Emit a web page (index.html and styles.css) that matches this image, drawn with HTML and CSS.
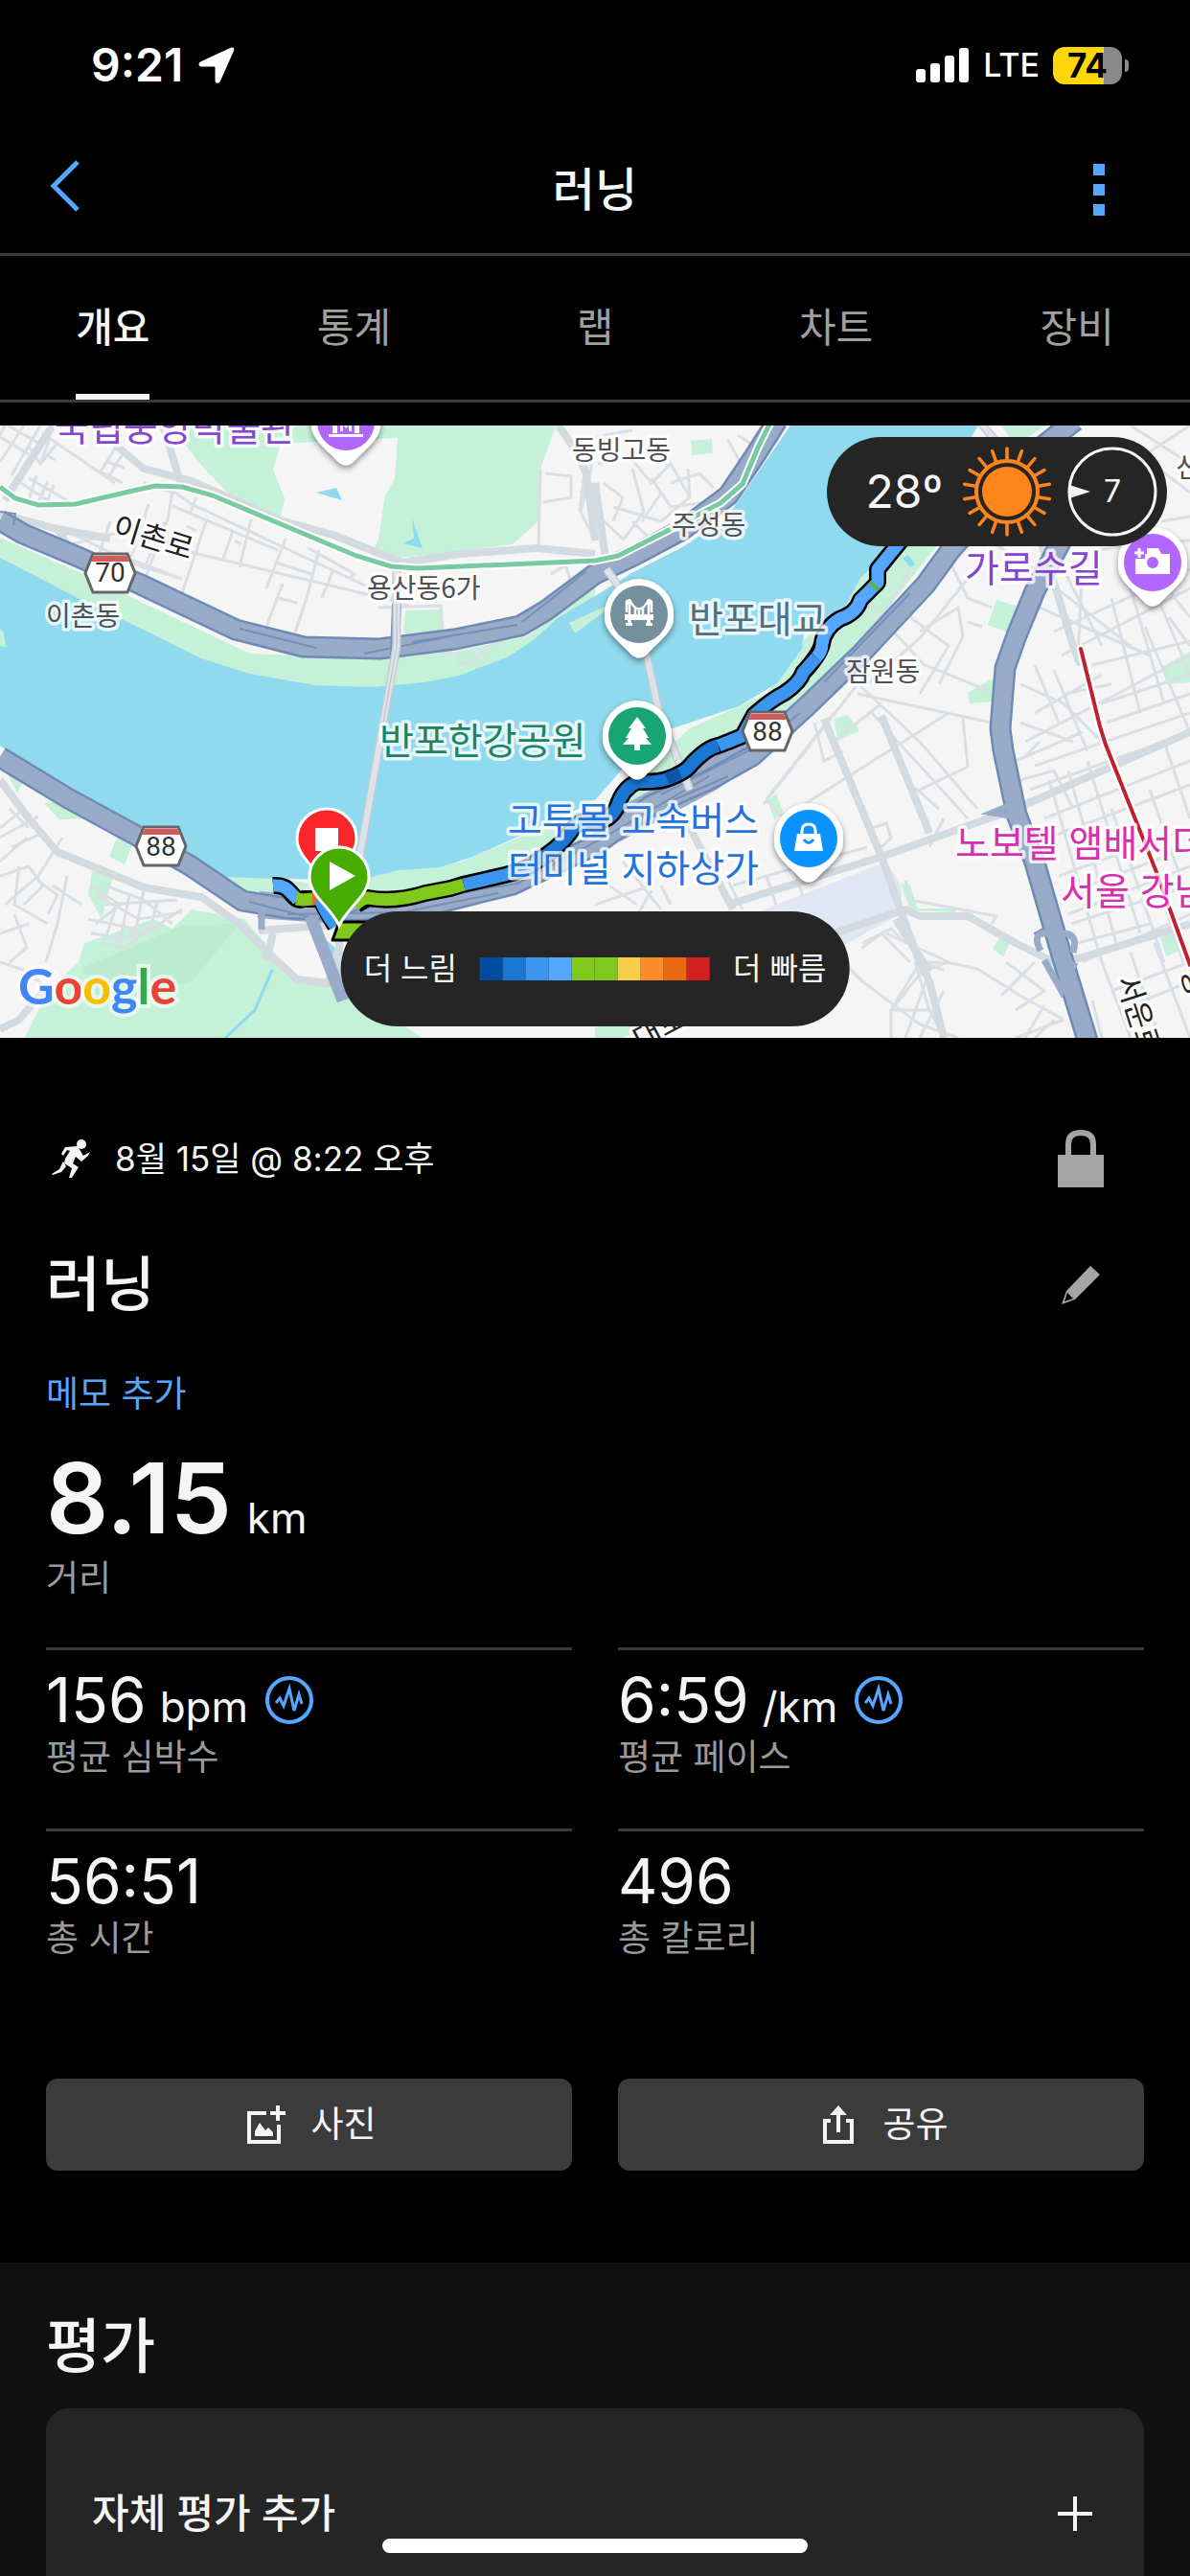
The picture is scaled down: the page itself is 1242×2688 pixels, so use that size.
FILE: index.html
```html
<!DOCTYPE html>
<html lang="ko">
<head>
	<meta charset="UTF-8">
	<title>러닝</title>
	<meta name="viewport" content="width=device-width, initial-scale=1.0"/>
	<link rel="stylesheet" href="styles.css">
</head>
<body>
<div class="app">
	<div class="status">
		<div class="status-left">
			<span class="clock">9:21</span>
			<svg class="i-loc" viewBox="0 0 38 38"><path fill="#fff" d="M34.500 0.500Q38.500 -0.200 37 4L23 35.500Q21.500 38.500 19 37.500Q17.500 37 17.500 35V21.500Q17.500 20.500 16.500 20.500H3Q0.500 20.500 0.500 18Q0.500 16 3 15Z"/></svg>
		</div>
		<div class="status-right">
			<svg class="i-signal" viewBox="0 0 56 36"><g fill="#fff"><rect x="0" y="22" width="10" height="14" rx="3"/><rect x="15" y="16" width="10" height="20" rx="3"/><rect x="30" y="8" width="10" height="28" rx="3"/><rect x="45" y="0" width="10" height="36" rx="3"/></g></svg>
			<span class="lte">LTE</span>
			<div class="battery"><span>74</span></div>
		</div>
	</div>

	<header class="nav">
		<button class="nav-btn" aria-label="뒤로"><svg class="i-back" viewBox="0 0 32 54"><path d="M29 2L4 27L29 52" fill="none" stroke="#55a6ff" stroke-width="5"/></svg></button>
		<h1>러닝</h1>
		<button class="nav-btn" aria-label="메뉴"><svg class="i-dots" viewBox="0 0 12 54"><path fill="#55a6ff" d="M0 0h12v12H0zM0 21h12v12H0zM0 42h12v12H0z"/></svg></button>
	</header>

	<nav class="tabs">
		<a href="#" class="on">개요</a>
		<a href="#">통계</a>
		<a href="#">랩</a>
		<a href="#">차트</a>
		<a href="#">장비</a>
	</nav>

	<div class="map">
		<svg class="map-svg" viewBox="0 0 1242 639" preserveAspectRatio="xMidYMid slice">
			<defs>
				<filter id="sh" x="-30%" y="-30%" width="160%" height="170%"><feDropShadow dx="0" dy="3" stdDeviation="3" flood-opacity=".45"/></filter>
				<path id="pin" d="M0 -37A37 37 0 0 1 36 4C36 18 20 29 9 41Q0 50 -9 41C-20 29 -36 18 -36 4A37 37 0 0 1 0 -37Z"/>
				<path id="mk" d="M0 -31A31 31 0 0 1 31 0C31 20 8 32 0 51C-8 32 -31 20 -31 0A31 31 0 0 1 0 -31Z"/>
				<g id="shield">
					<path d="M-18 -20H18L26 0L18 20H-18L-26 0Z" fill="#fff" stroke="#666" stroke-width="3"/>
					<path d="M-17 -18H17L20 -12H-20Z" fill="#d65a5a"/>
				</g>
			</defs>
			<rect width="1242" height="639" fill="#f5f5f5"/>

			<!-- parks -->
			<g fill="#c4f1d7">
				<path d="M194 21L214 46L242 74L293 95L297 76L285 46L293 19L415 13L412 56L402 73L395 119L390 129L416 138L467 133L535 124L562 100L564 46L580 0H200Z"/>
				<path d="M721 16L743 14L744 29L722 31Z"/>
				<path d="M0 117L87 155L170 195L261 238L396 244L475 236L550 220L621 165L621 250L400 290L200 260L0 150Z"/>
				<path d="M423 193L459 192L463 215L421 217Z"/>
				<path d="M225 465L330 478L420 462L480 456L640 388L720 316L800 280L838 225L900 150L940 110L990 110L840 300L700 390L620 440L480 490L380 510L270 500Z"/>
				<path d="M46 394L80 388L100 410L62 411ZM122 430L139 435L130 458L114 450ZM8 364L24 372L18 384ZM96 465L118 470L106 515L92 490Z"/>
				<path d="M82 560L88 540L160 515L180 525L200 505L255 515L285 550L300 575L330 583L370 590L440 639H26L50 590Z"/>
				<path d="M1040 182L1066 190L1052 216L1031 208Z"/>
				<path d="M1010 279L1038 263L1036 288L1012 290ZM870 306L885 302L897 318L875 329ZM801 392L810 384L818 405L808 411ZM1212 252L1242 236V268L1218 270ZM1036 546L1045 531L1056 535L1047 555ZM1210 530L1225 526L1231 548L1217 554ZM940 478L950 480L958 504L1000 504L996 508L950 506ZM1045 0H1092L1060 20ZM621 628L680 620L650 639H621Z"/>
			</g>
			<path d="M86 566L190 522L250 520L200 580L110 606Z" fill="#b5e5c7" opacity=".5"/>
			<path d="M775 514L862 480L925 455L940 480L942 508L880 543L862 550L830 510Z" fill="#e1e6f5"/>

			<!-- river -->
			<path fill="#8fdaee" d="M0 138L87 183L170 223L210 243L261 259L329 271L388 273L444 268L479 261L531 241L558 223L582 201L621 178L661 153L712 127L757 98L780 65L825 0H1021L985 60L934 126L898 159L882 189L839 219L837 233L811 269L771 293L696 318L655 352L621 391L586 409L491 451L459 461L416 464L376 474L293 473L234 471L190 449L143 421L75 384L0 334Z"/>
			<path d="M0 212L4 216L6 231L0 230ZM594 206L650 180L600 217Z" fill="#c4f1d7"/>
			<path d="M330 70L351 65L357 78ZM420 123L432 118L430 97L441 128ZM942 138L948 135L955 145L950 148ZM330 528L350 545L362 575L358 580Z" fill="#8fdaee"/>

			<!-- minor streets -->
			<g class="st">
				<path d="M5 0L-5 20M25 0L0 38M42 0L12 52M0 12L30 30M8 0L40 18M30 22L42 40L60 18M44 8L120 60M52 14L42 40M58 36L48 30M120 24L105 48L128 60M128 30L112 55M112 38L130 44M22 60L60 85M30 55L70 78M38 52L30 78M50 58L38 84M56 62L46 88"/>
				<path d="M150 60L180 70L175 98L145 176M180 68L200 82L430 190M205 75L198 92M215 100L185 190M180 84L290 130M243 110L232 142M262 98L250 148M298 118L278 170M333 130L320 180L300 240M322 128L370 155L364 160M348 150L336 180M288 143L325 155M295 165L278 210M290 180L310 185M155 82L140 130L110 180M60 105L110 130L190 160M172 100L150 150M115 100L98 150M190 130L420 185M395 190L460 188L462 214M130 110L70 125M125 140L190 160M245 120L252 124M195 105L205 110"/>
				<path d="M570 50L596 53V75L567 80M564 46L562 128M610 50L605 90M618 40L606 90L621 120M621 60L605 70M575 155L600 140M590 145L595 160"/>
				<path d="M621 12L660 5M624 40L655 30L680 60L700 40L720 75L690 100M630 60L650 75L640 100M660 45L672 90L650 120M680 55L700 85L740 80M640 85L690 100M700 60L730 50L745 65M720 75L718 45M660 100L675 115M625 95L650 118M690 70L670 100M700 90L712 95M770 10L785 20M760 15L772 38"/>
				<path d="M0 420L25 400M0 430L40 408M12 440L45 425M0 455L28 430M30 420L10 400M5 500L40 470L65 430M0 470L30 460L45 480L25 500M20 460L15 500L50 520M40 475L60 490L50 510M0 560L30 570L50 590M0 530L30 520M15 510L28 545L10 560M55 480L85 500M70 470L60 520L48 560M95 480L125 500L100 520M100 490L145 515L190 508M110 480L150 495L180 520M120 505L110 535M135 490L125 540M150 485L140 535M165 495L155 530M92 515L140 525M95 530L130 535L170 520M105 540L128 545L190 505M110 500L185 495"/>
				<path d="M898 239L950 150M880 255L960 330L1020 400M905 270L960 222L1010 160M950 200L990 230L960 280M960 215L1000 190L1005 220L980 270M985 130L1010 180L1035 190M1010 205L1025 210M1000 100L1080 150M870 300L800 390M895 280L1035 310M870 330L920 290M910 300L1010 410M900 180L965 250L1040 280M850 310L860 350L880 340"/>
				<path d="M797 395L895 270M840 395L990 300M960 380L1010 356L1005 306M985 410L970 440M800 392L840 430M955 378L980 400M910 420L925 415L930 430L920 440M945 475L950 495L1040 512L1035 520M765 480L905 440M800 470L810 500M830 465L838 492M760 475L775 505M690 480L700 500M621 500L650 490L680 480M621 470L665 500M650 455L690 505M680 485L660 520"/>
				<path d="M1108 240L1242 170M1100 215L1242 150M1085 190L1200 240M1090 160L1180 230M1110 150L1150 230M1130 140L1125 240M1160 180L1190 300M1180 170L1215 290M1200 160L1242 260M1140 130L1242 120M1170 110L1242 200M1070 330L1242 240M1060 350L1130 320M1080 300L1150 260M1065 270L1110 290L1150 330M1080 250L1105 310M1100 255L1135 340M1065 310L1120 330M1110 280L1160 270M1140 250L1242 225M1150 290L1242 260M1155 310L1242 280M1195 210L1242 320M1220 200L1242 230M1150 60L1242 0M1190 30L1242 70M1180 0L1242 40M1212 100L1242 95"/>
				<path d="M1075 380L1242 320M1090 410L1242 350M1095 430L1242 375M1080 355L1242 300M1105 470L1242 420M1110 490L1242 440M1115 510L1242 460M1118 520L1242 480M1095 370L1150 560M1115 360L1165 540M1135 350L1190 530M1160 400L1215 560M1175 380L1235 560M1200 380L1242 500M1215 330L1242 410M1065 370L1100 360L1120 400M1070 345L1085 330M1150 560L1180 639M1180 550L1210 639M1205 540L1242 639M1160 590L1242 560M1170 610L1242 580M1130 560L1242 510M1125 540L1200 520M1140 600L1150 639"/>
				<path d="M925 530L990 560L960 570M900 545L920 530L950 560M935 520L960 560L930 610V639M960 560L985 568M962 570L930 610H970L955 560M970 570L945 639M985 590L960 639M965 560L992 561L1020 567L1065 595L1110 620M1050 560L1090 590L1060 610M1110 620L1060 639M1100 620L1080 639M1090 605L1070 639M880 560L900 580L960 625L1000 639M1080 560L1045 595M970 610L985 639M900 540L930 525L945 540"/>
			</g>

			<!-- main roads -->
			<g class="rd">
				<path d="M55 0L5 78M0 92L60 108L115 118M120 20L150 45L200 58L290 98L350 115L420 143L480 134L560 128L621 134M60 108L80 140M170 0L190 65M583 0L600 25L612 50L621 120M621 60L635 160"/>
				<path d="M0 370L30 410L60 445L150 482L210 492L250 520L285 555L310 578L360 584M270 527L350 521M285 530L278 558M355 540L343 580M355 530L350 585M50 585L20 620L0 630"/>
				<path d="M860 306L920 450L945 520L960 560L970 580L985 639M920 303L970 425M760 500L920 450L1060 400M1060 400L1242 320M750 570L945 505L960 512L1010 512L1060 540L1100 560L1130 555L1242 520M720 420L765 505M1080 100L1105 180L1120 230L1128 250M935 515L970 570"/>
			</g>
			<path d="M175 185L260 225L300 238L400 243L460 236L478 238L480 248H492L510 230L560 210" class="st"/>

			<!-- expressways -->
			<path d="M640 420L690 393L740 366L790 333" fill="none" stroke="#98abc9" stroke-width="32"/>
			<path d="M270 500L376 508L455 500" fill="none" stroke="#98abc9" stroke-width="28"/>
			<g class="hw-o">
				<path d="M0 99L24 113L79 136L147 166L246 213L317 231L396 233L475 223L543 209L570 193L621 155L661 136L712 109L760 73L787 33L811 -5"/>
				<path d="M0 346L71 389L139 426L198 459L253 496L301 504L376 506L455 499L535 479L621 438L680 396L740 370L785 345L843 292L898 239L966 166L993 129L1090 20L1122 -5"/>
				<path d="M1108 120L1080 173L1061 219L1049 253L1044 316L1047 339L1061 406L1080 456L1108 553L1136 645"/>
			</g>
			<g class="hw">
				<path d="M0 99L24 113L79 136L147 166L246 213L317 231L396 233L475 223L543 209L570 193L621 155L661 136L712 109L760 73L787 33L811 -5"/>
				<path d="M0 346L71 389L139 426L198 459L253 496L301 504L376 506L455 499L535 479L621 438L680 396L740 370L785 345L843 292L898 239L966 166L993 129L1090 20L1122 -5"/>
				<path d="M1108 120L1080 173L1061 219L1049 253L1044 316L1047 339L1061 406L1080 456L1108 553L1136 645"/>
			</g>
			<g fill="none" stroke="#7590b8" stroke-width="2">
				<path d="M0 90L16 92L14 104M250 212L330 232M380 238L470 220M430 226L540 208M545 205L612 152M260 497L330 515L400 500L540 478L630 430L740 366M300 510L420 508L520 488M690 385L790 335L835 300M700 392L760 366M860 268L950 175M410 186L408 240M418 186L416 232M1085 540L1080 530L1090 524M1112 530L1122 540L1118 550"/>
			</g>
			<path d="M324 512L358 600" stroke="#98abc9" stroke-width="13" fill="none"/>
			<path d="M273 508V526M1058 395L1036 404L1060 408M1090 558L1108 590L1122 560M1086 548Q1076 528 1094 530M1110 530Q1126 530 1120 550" stroke="#98abc9" stroke-width="7" fill="none"/>
			<!-- bridges -->
			<path d="M414 145V230L372 470M633 150L665 195L688 300L720 380M1022 -5L1050 30" fill="none" stroke="#c3ccd6" stroke-width="9"/>
			<path d="M414 145V230L372 470M633 150L665 195L688 300L720 380M1022 -5L1050 30" fill="none" stroke="#dde3e9" stroke-width="6"/>
			<path d="M414 180V230L400 310" fill="none" stroke="#b7c1cd" stroke-width="1"/>
			<path d="M284 568L266 610L235 639" stroke="#8fdaee" stroke-width="3" fill="none"/>

			<!-- subway lines -->
			<path d="M0 64L16 76L40 83L79 82L139 68L162 63L190 64L222 73L372 136L408 147L436 149L621 141L645 136L700 108L752 81L775 61L791 23L805 -5" fill="none" stroke="#fff" stroke-width="9"/>
			<path d="M0 64L16 76L40 83L79 82L139 68L162 63L190 64L222 73L372 136L408 147L436 149L621 141L645 136L700 108L752 81L775 61L791 23L805 -5" fill="none" stroke="#78caa0" stroke-width="5"/>
			<path d="M1128 233L1148 314L1154 333L1183 406L1207 466L1242 563" fill="none" stroke="#fff" stroke-width="9" stroke-linecap="round"/>
			<path d="M1128 233L1148 314L1154 333L1183 406L1207 466L1242 563" fill="none" stroke="#c0202f" stroke-width="4" stroke-linecap="round"/>

			<!-- run track -->
			<g fill="none" stroke-linejoin="round">
				<path stroke="#000" stroke-width="18" d="M285 480Q297 479 303 487Q310 497 316 494L334 494Q345 514 350 522M372 500L384 493Q412 498 444 488L470 483L483 479L527 469Q548 464 560 455Q584 440 594 426Q604 410 620 413Q636 414 644 398Q650 378 665 372Q688 372 696 369Q716 362 722 353Q738 336 750 334L775 324L787 302Q805 286 819 279Q835 268 838 258Q855 240 858 228Q860 212 876 202Q894 196 898 182L916 164V150L942 118"/>
				<path stroke="#000" stroke-width="3" fill="#80c91c" d="M347 537L354 518H400V537Z"/>
				<g stroke-width="13">
					<path stroke="#55a6ff" d="M285 480Q297 479 303 487L311 495"/>
					<path stroke="#80c91c" d="M309 494L316 495L327 494"/>
					<path stroke="#ea680f" d="M326 494H334"/>
					<path stroke="#3c96f0" d="M334 494Q340 510 350 522"/>
					<path stroke="#80c91c" d="M370 501Q376 494 384 493Q412 498 444 488L470 483L484 479"/>
					<path stroke="#3c96f0" d="M484 479L527 469Q548 464 560 455"/>
					<path stroke="#1976d2" d="M560 455Q584 440 594 426Q604 410 620 413Q636 414 644 398Q650 378 665 372Q688 372 696 369Q716 362 722 353Q738 336 750 334"/>
					<path stroke="#0d55a8" d="M696 369L710 363"/>
					<path stroke="#3c96f0" d="M750 334L775 324L787 302Q805 286 819 279Q835 268 838 258L852 242"/>
					<path stroke="#55a6ff" d="M852 242Q858 236 858 228Q860 212 876 202Q894 196 898 182L916 164V150L942 118"/>
					<path stroke="#5db04a" d="M911 169L914 166"/>
				</g>
			</g>

			<!-- road shields -->
			<g class="num">
				<use href="#shield" x="115" y="154"/><text x="115" y="163">70</text>
				<use href="#shield" x="168" y="439"/><text x="168" y="449">88</text>
				<use href="#shield" x="801" y="319"/><text x="801" y="329">88</text>
			</g>

			<!-- labels -->
			<g class="lb small">
				<text x="597" y="36">동빙고동</text>
				<text x="383" y="180">용산동6가</text>
				<text x="48" y="209">이촌동</text>
				<text x="701" y="114">주성동</text>
				<text x="883" y="267">잠원동</text>
				<text x="1227" y="54">신사동</text>
			</g>
			<g class="lb road">
				<text transform="translate(116 115) rotate(17)">이촌로</text>
				<text transform="translate(1165 578) rotate(72)">서운로</text>
				<text transform="translate(1232 570) rotate(72)">용</text>
				<text transform="translate(668 652) rotate(-28)">대로</text>
			</g>
			<g class="lb poi">
				<text x="57" y="16" fill="#8743d1">국립중앙박물관</text>
				<text x="1007" y="163" fill="#8743d1">가로수길</text>
				<text x="719" y="216" fill="#546e7a">반포대교</text>
				<text x="396" y="343" fill="#1a8560">반포한강공원</text>
				<text x="792" y="426" text-anchor="end" fill="#2373dc">고투몰 고속버스</text>
				<text x="792" y="476" text-anchor="end" fill="#2373dc">터미널 지하상가</text>
				<text x="997" y="450" fill="#d92fae">노보텔 앰배서더</text>
				<text x="1107" y="500" fill="#d92fae">서울 강남</text>
			</g>

			<!-- place pins -->
			<g transform="translate(361 -4)"><use href="#pin" fill="#fff" filter="url(#sh)"/><circle r="30" fill="#b066ff"/><path d="M-18 13H18V16H-18ZM-14 -10H-9V12H-14ZM9 -10H14V12H9ZM-6 10V-3H-3L0 2L3 -3H6V10H3V3L0 7L-3 3V10Z" fill="#fff"/></g>
			<g transform="translate(1203 143)"><use href="#pin" fill="#fff" filter="url(#sh)"/><circle r="30" fill="#b066ff"/><path d="M-6 -15H6L9 -9H18V12H-18V-4H-8V-9H-6Z" fill="#fff"/><circle r="6" cy="0" fill="#b066ff"/><path d="M-14 -15V-5M-19 -10H-9" stroke="#fff" stroke-width="3"/></g>
			<g transform="translate(667 197)"><use href="#pin" fill="#fff" filter="url(#sh)"/><circle r="30" fill="#74909c"/><path d="M-10 -16V10M10 -16V10M-4 -6V2M0 -5V2M4 -6V2M-10 -15Q0 4 10 -15M-13 -15L-10 -10M13 -15L10 -10M-13 -14V-2M13 -14V-2" stroke="#fff" stroke-width="2.500" fill="none"/><path d="M-15 0H15V6H-15ZM-14 9H-7V12H-14ZM7 9H14V12H7ZM-12 4H-8V11H-12ZM8 4H12V11H8Z" fill="#fff"/></g>
			<g transform="translate(665 324)"><use href="#pin" fill="#fff" filter="url(#sh)"/><circle r="30" fill="#18a574"/><path d="M0 -20L9 -8H6L12 2H9L15 9H3V15H-3V9H-15L-9 2H-12L-6 -8H-9Z" fill="#fff"/></g>
			<g transform="translate(844 431)"><use href="#pin" fill="#fff" filter="url(#sh)"/><circle r="30" fill="#0a93ff"/><path d="M-12 -5H12L15 13H-15Z" fill="#fff"/><path d="M-7 -4V-8Q-7 -15 0 -15Q7 -15 7 -8V-4" fill="none" stroke="#fff" stroke-width="3"/><path d="M-5 1Q0 8 5 1" fill="none" stroke="#0a93ff" stroke-width="3"/></g>

			<!-- finish and start -->
			<g transform="translate(341 431)"><use href="#mk" fill="#fb252c" stroke="#fff" stroke-width="3"/><path d="M-12 -11H12V13H-12Z" fill="#fff"/></g>
			<g transform="translate(354 471)"><use href="#mk" fill="#45ad00" stroke="#fff" stroke-width="3"/><path d="M-10 -16L17 -1L-10 14Z" fill="#fff"/></g>

			<text class="google" x="19" y="604"><tspan fill="#4285f4">G</tspan><tspan fill="#ea4335">o</tspan><tspan fill="#fbbc04">o</tspan><tspan fill="#4285f4">g</tspan><tspan fill="#34a853">l</tspan><tspan fill="#ea4335">e</tspan></text>
		</svg>

		<div class="weather">
			<span class="temp">28º</span>
			<svg class="i-sun" viewBox="-47 -47 94 94">
				<circle r="26" fill="#ff851b"/>
				<circle r="32" fill="none" stroke="#ff851b" stroke-width="4"/>
				<path fill="none" stroke="#ff851b" stroke-width="3.500" stroke-linecap="round" d="M0 -33V-45M11.300 -31L15.400 -42.300M21.200 -25.300L28.900 -34.500M28.600 -16.500L39 -22.500M32.500 -5.700L44.300 -7.800M32.500 5.700L44.300 7.800M28.600 16.500L39 22.500M21.200 25.300L28.900 34.500M11.300 31L15.400 42.300M0 33V45M-11.300 31L-15.400 42.300M-21.200 25.300L-28.900 34.500M-28.600 16.500L-39 22.500M-32.500 5.700L-44.300 7.800M-32.500 -5.700L-44.300 -7.800M-28.600 -16.500L-39 -22.500M-21.200 -25.300L-28.900 -34.500M-11.300 -31L-15.400 -42.300"/>
			</svg>
			<div class="wind">
				<svg viewBox="0 0 94 94"><circle cx="47" cy="47" r="45" fill="none" stroke="#f5f5f5" stroke-width="3"/><path d="M2 40L24 47L2 54Z" fill="#f5f5f5"/></svg>
				<span>7</span>
			</div>
		</div>

		<div class="legend">
			<span>더 느림</span>
			<div class="scale"><i class="c1"></i><i class="c2"></i><i class="c3"></i><i class="c4"></i><i class="c5"></i><i class="c5"></i><i class="c6"></i><i class="c7"></i><i class="c8"></i><i class="c9"></i></div>
			<span>더 빠름</span>
		</div>
	</div>

	<main class="summary">
		<div class="meta">
			<svg class="i-run" viewBox="0 0 40 40"><g fill="#f5f5f5"><circle cx="31" cy="5" r="5"/><path d="M10 15L14 8L27 7L33 17L40 13L38 17L31 23L25 18L22 25L28 29L21 40L18 40L21 30L13 25L14 20L19 12L16 11L12 17Z"/><path d="M12 23L15 28L10 34L1 37L0 36L8 31Z"/></g></svg>
			<span>8월 15일 @ 8:22 오후</span>
			<button class="icon-btn" aria-label="비공개"><svg class="i-lock" viewBox="0 0 48 60"><path fill="#a5a5a5" d="M0 26H48V60H0Z"/><path d="M11 28V15Q11 3 24 3Q37 3 37 15V28" fill="none" stroke="#a5a5a5" stroke-width="6"/></svg></button>
		</div>
		<div class="name">
			<h2>러닝</h2>
			<button class="icon-btn" aria-label="이름 편집"><svg class="i-pen" viewBox="0 0 48 42"><path fill="#a5a5a5" d="M34 1L44 10L18 36L4 41L9 27Z"/><path fill="#000" d="M10 29L16 35L7 38Z"/></svg></button>
		</div>
		<a href="#" class="memo">메모 추가</a>

		<div class="distance"><b>8.15</b><span>km</span></div>
		<div class="label">거리</div>

		<div class="stats">
			<div class="stat">
				<div class="value">156<span>bpm</span><svg class="i-wave" viewBox="0 0 50 50"><circle cx="25" cy="25" r="23" fill="none" stroke="#55a6ff" stroke-width="4"/><path d="M11 28L15 23L19 31L25 13L30 36L35 19L38 29" fill="none" stroke="#55a6ff" stroke-width="3"/></svg></div>
				<div class="label">평균 심박수</div>
			</div>
			<div class="stat">
				<div class="value">6:59<span>/km</span><svg class="i-wave" viewBox="0 0 50 50"><circle cx="25" cy="25" r="23" fill="none" stroke="#55a6ff" stroke-width="4"/><path d="M11 28L15 23L19 31L25 13L30 36L35 19L38 29" fill="none" stroke="#55a6ff" stroke-width="3"/></svg></div>
				<div class="label">평균 페이스</div>
			</div>
			<div class="stat">
				<div class="value">56:51</div>
				<div class="label">총 시간</div>
			</div>
			<div class="stat">
				<div class="value">496</div>
				<div class="label">총 칼로리</div>
			</div>
		</div>

		<div class="actions">
			<button class="btn"><svg class="i-btn" viewBox="0 0 40 40"><path d="M20 8H2V38H33V20" fill="none" stroke="#f5f5f5" stroke-width="4"/><path d="M32 0V16M24 8H40" stroke="#f5f5f5" stroke-width="4"/><path d="M8 32V27L13 18L19 26L22 23L27 28V32Z" fill="#f5f5f5"/></svg>사진</button>
			<button class="btn"><svg class="i-btn" viewBox="0 0 40 40"><path d="M12 16H6V38H34V16H28M20 28V6" fill="none" stroke="#f5f5f5" stroke-width="4"/><path d="M20 0L29 10H11Z" fill="#f5f5f5"/></svg>공유</button>
		</div>
	</main>

	<section class="rating">
		<h2>평가</h2>
		<button class="card">
			<span>자체 평가 추가</span>
			<svg class="i-plus" viewBox="0 0 36 36"><path d="M18 0V36M0 18H36" stroke="#f5f5f5" stroke-width="4"/></svg>
		</button>
	</section>
	<div class="home"></div>
</div>
</body>
</html>
```
FILE: styles.css
```css
*{box-sizing: border-box;}
body{
	margin: 0;
	background: #000;
	color: #f5f5f5;
	font-family: Inter, "Noto Sans CJK KR", sans-serif;
}
h1,h2{margin: 0;font-weight: 500;}
a{text-decoration: none;}
button{
	border: 0;
	padding: 0;
	background: none;
	color: inherit;
	font: inherit;
}
svg{display: block;flex: none;}
.app{
	position: relative;
	min-height: 100vh;
	display: flex;
	flex-direction: column;
	overflow: hidden;
}

/* status bar */
.status{
	height: 132px;
	padding: 4px 64px 0 95px;
	display: flex;
	align-items: center;
	justify-content: space-between;
	color: #fff;
}
.status-left,.status-right{display: flex;align-items: center;}
.clock{font-size: 48px;font-weight: 600;line-height: 60px;}
.i-loc{width: 38px;height: 38px;margin-left: 16px;}
.i-signal{width: 56px;height: 36px;}
.lte{font-size: 34px;font-weight: 500;line-height: 48px;margin: 0 14px;}
.battery{
	position: relative;
	width: 72px;
	height: 39px;
	margin-right: 7px;
	border-radius: 12px;
	background: linear-gradient(90deg, #ffd60a 74%, #8a8a8a 74%);
	color: #000;
	font-size: 35px;
	font-weight: 700;
	line-height: 39px;
	text-align: center;
}
.battery:after{
	content: "";
	position: absolute;
	right: -7px;
	top: 13px;
	width: 4px;
	height: 13px;
	border-radius: 0 4px 4px 0;
	background: #8a8a8a;
}

/* header */
.nav{
	height: 135px;
	padding: 0 46px;
	display: flex;
	align-items: center;
	justify-content: space-between;
	border-bottom: 3px solid #3a3a3a;
}
.nav h1{font-size: 48px;line-height: 60px;}
.nav-btn{width: 98px;height: 98px;display: flex;align-items: center;}
.nav-btn:first-child{padding: 0 0 8px 6px;}
.nav-btn:last-child{justify-content: center;}
.i-back{width: 32px;height: 54px;}
.i-dots{width: 12px;height: 54px;}

.tabs{
	display: grid;
	grid-template-columns: repeat(5, 1fr);
	justify-items: center;
	height: 153px;
	margin: 0 -8px 24px;
	border-bottom: 3px solid #3a3a3a;
}
.tabs a{
	height: 150px;
	line-height: 150px;
	font-size: 42px;
	color: #a0a0a0;
}
.tabs .on{color: #f5f5f5;font-weight: 500;border-bottom: 6px solid #f5f5f5;}

/* map */
.map{position: relative;}
.map-svg{width: 100%;height: auto;}
.st{fill: none;stroke: #d9dfe5;stroke-width: 3;}
.rd{fill: none;stroke: #d3dae0;stroke-width: 8;stroke-linejoin: round;}
.hw-o,.hw{fill: none;stroke-linejoin: round;}
.hw-o{stroke: #6f8bb5;stroke-width: 23;}
.hw{stroke: #98abc9;stroke-width: 18;}
.num{font: 28px Roboto, sans-serif;text-anchor: middle;fill: #333;}
.lb{
	font-family: "Noto Sans CJK KR", sans-serif;
	paint-order: stroke;
	stroke: #fff;
	stroke-opacity: .8;
	stroke-width: 7px;
	stroke-linejoin: round;
}
.small{font-size: 28px;fill: #505050;}
.road{font-size: 31px;fill: #222;}
.poi{font-size: 39px;}
.google{
	font: 700 52px Lato, sans-serif;
	paint-order: stroke;
	stroke: #fff;
	stroke-opacity: .6;
	stroke-width: 8px;
}
.weather{
	position: absolute;
	top: 12px;
	right: 24px;
	height: 114px;
	padding: 0 10px 0 40px;
	display: flex;
	align-items: center;
	border-radius: 57px;
	background: #252525;
}
.temp{font-size: 48px;line-height: 60px;}
.i-sun{width: 94px;height: 94px;margin: 0 16px 0 20px;}
.wind{position: relative;width: 94px;height: 94px;}
.wind span{
	position: absolute;
	inset: 0;
	font-size: 32px;
	line-height: 94px;
	text-align: center;
}
.legend{
	position: absolute;
	left: 50%;
	bottom: 12px;
	transform: translateX(-50%);
	height: 120px;
	padding: 0 24px;
	display: flex;
	align-items: center;
	gap: 24px;
	border-radius: 60px;
	background: #252525;
	font-size: 32px;
	line-height: 48px;
	white-space: nowrap;
}
.scale{display: flex;}
.scale i{width: 24px;height: 24px;}
.c1{background: #004a9f;}
.c2{background: #1976d2;}
.c3{background: #3c96f0;}
.c4{background: #55a6ff;}
.c5{background: #80c91c;}
.c6{background: #f9cc4a;}
.c7{background: #fb8c28;}
.c8{background: #ea680f;}
.c9{background: #d32020;}

/* summary */
.summary{padding: 96px 48px;}
.meta,.name{display: flex;align-items: center;}
.meta{height: 60px;font-size: 35px;line-height: 48px;}
.i-run{width: 40px;height: 40px;margin: 0 26px 0 6px;}
.icon-btn{margin-left: auto;padding-right: 42px;}
.i-lock{width: 48px;height: 60px;}
.i-pen{width: 48px;height: 42px;}
.name{margin-top: 60px;}
.name h2,.rating h2{font-size: 62px;line-height: 84px;}
.memo{
	display: block;
	margin-top: 48px;
	color: #55a6ff;
	font-size: 37px;
	line-height: 48px;
}
.distance{
	display: flex;
	align-items: baseline;
	gap: 16px;
	margin: 36px 0 12px;
	font-size: 44px;
	line-height: 48px;
}
.distance b{font-size: 102px;font-weight: 600;line-height: 96px;}
.label{color: #9a9a9a;font-size: 37px;line-height: 48px;}
.stats,.actions{
	display: grid;
	grid-template-columns: 1fr 1fr;
	column-gap: 48px;
}
.stats{margin-top: 48px;}
.stat{
	padding: 16px 0 50px;
	border-top: 3px solid #3a3a3a;
}
.value{
	display: flex;
	align-items: baseline;
	font-size: 64px;
	line-height: 72px;
}
.value span{font-size: 44px;line-height: 48px;margin-left: 14px;}
.i-wave{width: 50px;height: 50px;margin-left: 18px;align-self: center;}
.actions{margin-top: 72px;}
.btn{
	height: 96px;
	padding-left: 6px;
	display: flex;
	align-items: center;
	justify-content: center;
	gap: 26px;
	border-radius: 12px;
	background: #3b3b3b;
	font-size: 37px;
	line-height: 48px;
}
.i-btn{width: 40px;height: 40px;}

/* rating */
.rating{
	flex: 1;
	display: flex;
	flex-direction: column;
	padding: 48px 48px 0;
	background: #101010;
}
.rating h2{line-height: 80px;margin-bottom: 24px;}
.card{
	flex: 1;
	display: flex;
	align-items: flex-start;
	justify-content: space-between;
	padding: 80px 54px 32px 48px;
	border-radius: 24px 24px 0 0;
	background: #252525;
	font-size: 42px;
	font-weight: 500;
	line-height: 60px;
}
.i-plus{width: 36px;height: 36px;margin-top: 12px;}
.home{
	position: absolute;
	left: 50%;
	bottom: 24px;
	width: 444px;
	height: 15px;
	transform: translateX(-50%);
	border-radius: 8px;
	background: #fff;
}
```
